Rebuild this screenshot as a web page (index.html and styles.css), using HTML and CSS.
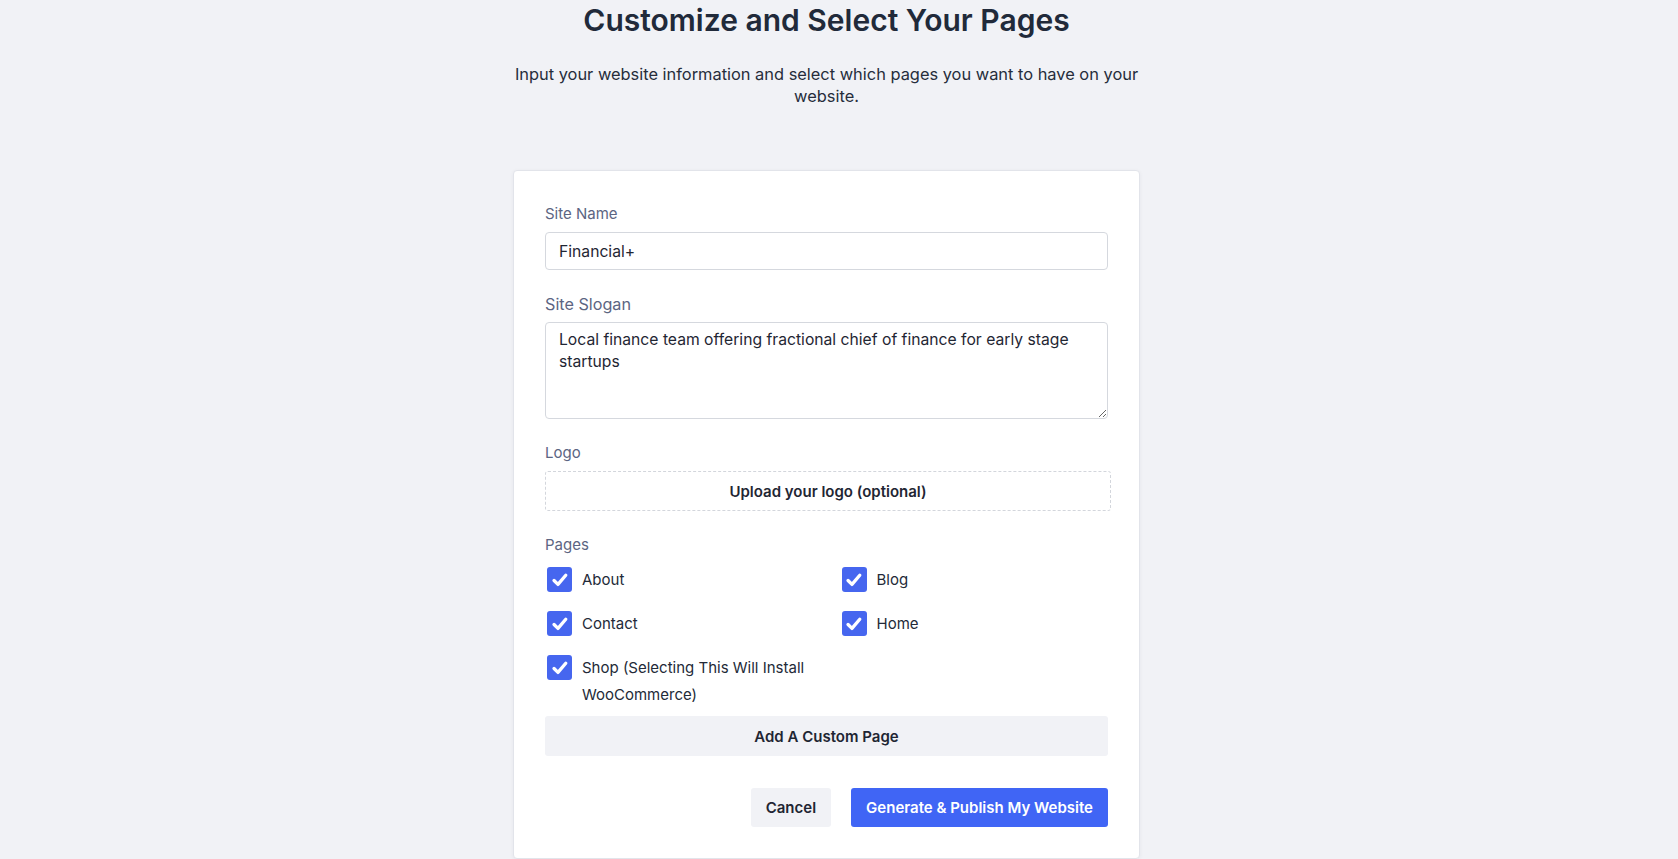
FILE: index.html
```html
<!DOCTYPE html>
<html lang="en">
<head>
    <meta charset="UTF-8">
    <meta name="viewport" content="width=device-width, initial-scale=1.0">
    <title>Customize and Select Your Pages</title>
    <link rel="stylesheet" href="styles.css">
</head>
<body>

<div class="page">
    <h1>Customize and Select Your Pages</h1>
    <p class="intro">Input your website information and select which pages you want to have on your website.</p>

    <form class="card" id="siteForm">
        <label class="field-label" for="siteName">Site Name</label>
        <input class="text-input" type="text" id="siteName" value="Financial+">

        <label class="field-label field-label-lg" for="siteSlogan">Site Slogan</label>
        <textarea class="text-area" id="siteSlogan">Local finance team offering fractional chief of finance for early stage startups</textarea>

        <label class="field-label">Logo</label>
        <button type="button" class="upload-box">Upload your logo (optional)</button>

        <label class="field-label">Pages</label>
        <div class="pages-grid">
            <label class="page-option">
                <span class="check"><svg viewBox="0 0 24 24"><path d="M5.5 12.5l4.3 4.3 8.5-10"/></svg></span>
                <span class="page-name">About</span>
            </label>
            <label class="page-option">
                <span class="check"><svg viewBox="0 0 24 24"><path d="M5.5 12.5l4.3 4.3 8.5-10"/></svg></span>
                <span class="page-name">Blog</span>
            </label>
            <label class="page-option">
                <span class="check"><svg viewBox="0 0 24 24"><path d="M5.5 12.5l4.3 4.3 8.5-10"/></svg></span>
                <span class="page-name">Contact</span>
            </label>
            <label class="page-option">
                <span class="check"><svg viewBox="0 0 24 24"><path d="M5.5 12.5l4.3 4.3 8.5-10"/></svg></span>
                <span class="page-name">Home</span>
            </label>
            <label class="page-option">
                <span class="check"><svg viewBox="0 0 24 24"><path d="M5.5 12.5l4.3 4.3 8.5-10"/></svg></span>
                <span class="page-name">Shop (Selecting This Will Install WooCommerce)</span>
            </label>
        </div>

        <button type="button" class="add-page">Add A Custom Page</button>

        <div class="actions">
            <button type="button" class="btn-cancel">Cancel</button>
            <button type="submit" class="btn-primary">Generate &amp; Publish My Website</button>
        </div>
    </form>
</div>

</body>
</html>
```

FILE: styles.css
```css
* {
    box-sizing: border-box;
}
body {
    margin: 0;
    background-color: #f1f2f6;
    font-family: Inter, "Noto Sans", sans-serif;
    color: #1f2633;
}
.page {
    display: flex;
    flex-direction: column;
    align-items: center;
    padding-right: 25px;
    padding-bottom: 40px;
}
h1 {
    margin: 0;
    font-size: 30px;
    line-height: 40px;
    font-weight: 600;
    color: #212a3a;
}
.intro {
    margin: 24px 0 0;
    max-width: 640px;
    text-align: center;
    font-size: 16.4px;
    line-height: 21.5px;
    color: #262d3b;
}
.card {
    display: flex;
    flex-direction: column;
    width: 627px;
    margin-top: 63px;
    padding: 33px 31px 31px;
    background: #fff;
    border: 1px solid #e2e4ea;
    border-radius: 4px;
    box-shadow: 0 1px 4px rgba(20, 30, 60, 0.05);
}
.field-label {
    font-size: 15px;
    line-height: 20px;
    color: #5c6582;
    margin-bottom: 8px;
}
.field-label-lg {
    font-size: 16.2px;
}
.text-input,
.text-area {
    display: block;
    width: 100%;
    font-family: inherit;
    font-size: 15.7px;
    color: #1f2633;
    border: 1px solid #d5d8de;
    border-radius: 4px;
    background: #fff;
    margin-bottom: 24px;
}
.text-input {
    height: 38px;
    padding: 0 13px;
}
.text-area {
    height: 97px;
    padding: 6px 13px;
    line-height: 21.5px;
    resize: vertical;
}
.upload-box {
    width: calc(100% + 3px);
    height: 40px;
    margin-bottom: 24px;
    border: 1px dashed #d3d6dc;
    border-radius: 3px;
    background: #fff;
    font-family: inherit;
    font-size: 15px;
    font-weight: 600;
    color: #1f2633;
    cursor: pointer;
}
.pages-grid {
    display: grid;
    grid-template-columns: 1fr 1fr;
    column-gap: 26px;
    row-gap: 11px;
}
.page-option {
    display: flex;
    align-items: flex-start;
    gap: 10px;
    padding: 3px 2px;
    font-size: 15px;
    line-height: 27px;
    color: #232a38;
    cursor: pointer;
}
.check {
    flex: none;
    width: 25px;
    height: 25px;
    margin-top: 1px;
    border-radius: 3px;
    background-color: #4666ef;
    display: flex;
    align-items: center;
    justify-content: center;
}
.check svg {
    width: 22px;
    height: 22px;
    fill: none;
    stroke: #fff;
    stroke-width: 3.6;
    stroke-linecap: round;
    stroke-linejoin: round;
}
.add-page {
    height: 40px;
    margin-top: 5px;
    border: none;
    border-radius: 3px;
    background-color: #f1f2f6;
    font-family: inherit;
    font-size: 15px;
    font-weight: 600;
    color: #1f2633;
    cursor: pointer;
}
.actions {
    display: flex;
    justify-content: flex-end;
    gap: 20px;
    margin-top: 32px;
}
.btn-cancel,
.btn-primary {
    height: 39px;
    padding: 0 15px;
    border: none;
    border-radius: 3px;
    font-family: inherit;
    font-size: 15px;
    font-weight: 600;
    cursor: pointer;
}
.btn-cancel {
    background-color: #f1f2f6;
    color: #1f2633;
}
.btn-primary {
    background-color: #4065f5;
    color: #fff;
}
```
